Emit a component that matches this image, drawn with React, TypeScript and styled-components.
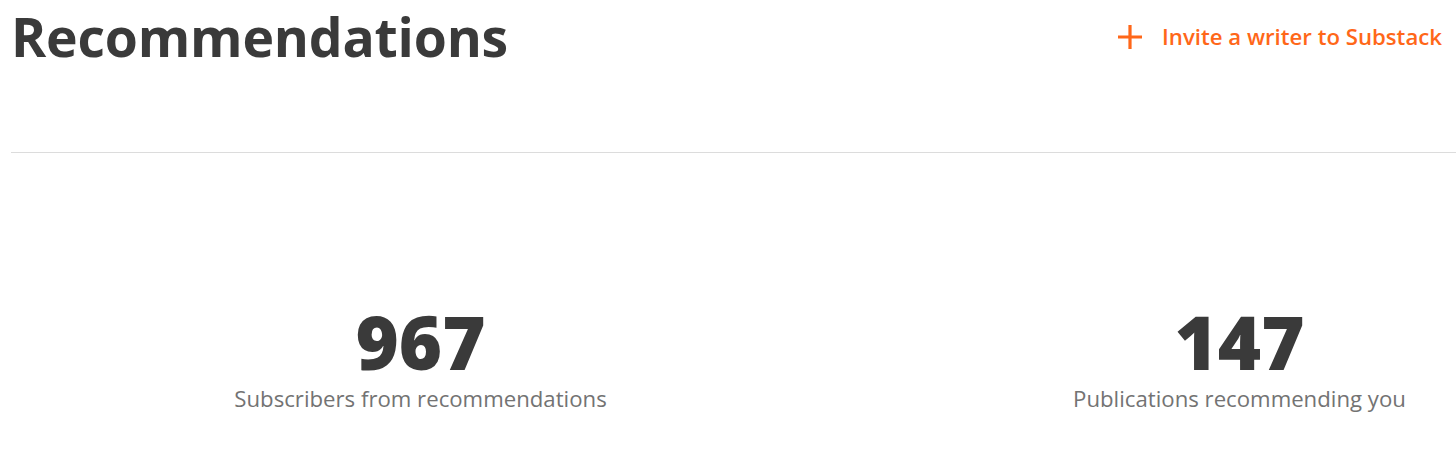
import styled, { createGlobalStyle } from "styled-components";

const GlobalStyle = createGlobalStyle`
  html, body {
    margin: 0;
    padding: 0;
    background: #ffffff;
    overflow: hidden;
  }
  body {
    font-family: "Open Sans", "Noto Sans", sans-serif;
  }
`;

const Page = styled.div`
  width: 1456px;
  height: 465px;
  padding-left: 11px;
  box-sizing: border-box;
  overflow: hidden;
`;

const Header = styled.div`
  display: flex;
  align-items: flex-start;
  justify-content: space-between;
  padding-right: 14px;
  height: 152px;
  border-bottom: 1px solid #dcdcdc;
`;

const Title = styled.h1`
  margin: 0;
  padding-top: 1px;
  font-size: 53.5px;
  line-height: 72px;
  font-weight: 700;
  color: #3a3a3a;
  letter-spacing: -0.2px;
`;

const InviteLink = styled.a`
  display: flex;
  align-items: center;
  gap: 20px;
  margin-top: 21px;
  color: #ff6719;
  font-size: 22.2px;
  font-weight: 600;
  text-decoration: none;
  cursor: pointer;
`;

const Stats = styled.div`
  display: grid;
  grid-template-columns: 819px 819px;
  padding-top: 146px;
`;

const Stat = styled.div`
  display: flex;
  flex-direction: column;
  align-items: center;
`;

const Value = styled.div`
  font-size: 74px;
  line-height: 86px;
  font-weight: 800;
  color: #3a3a3a;
`;

const Label = styled.div`
  font-size: 22.2px;
  line-height: 28px;
  color: #737373;
`;

const PlusIcon = () => (
  <svg width="24" height="24" viewBox="0 0 24 24" aria-hidden="true">
    <path d="M12 0v24M0 12h24" stroke="#ff6719" strokeWidth="3.2" fill="none" />
  </svg>
);

const stats = [
  { value: "967", label: "Subscribers from recommendations" },
  { value: "147", label: "Publications recommending you" },
];

export default function App() {
  return (
    <>
      <GlobalStyle />
      <Page>
        <Header>
          <Title>Recommendations</Title>
          <InviteLink>
            <PlusIcon />
            Invite a writer to Substack
          </InviteLink>
        </Header>
        <Stats>
          {stats.map((s) => (
            <Stat key={s.label}>
              <Value>{s.value}</Value>
              <Label>{s.label}</Label>
            </Stat>
          ))}
        </Stats>
      </Page>
    </>
  );
}
